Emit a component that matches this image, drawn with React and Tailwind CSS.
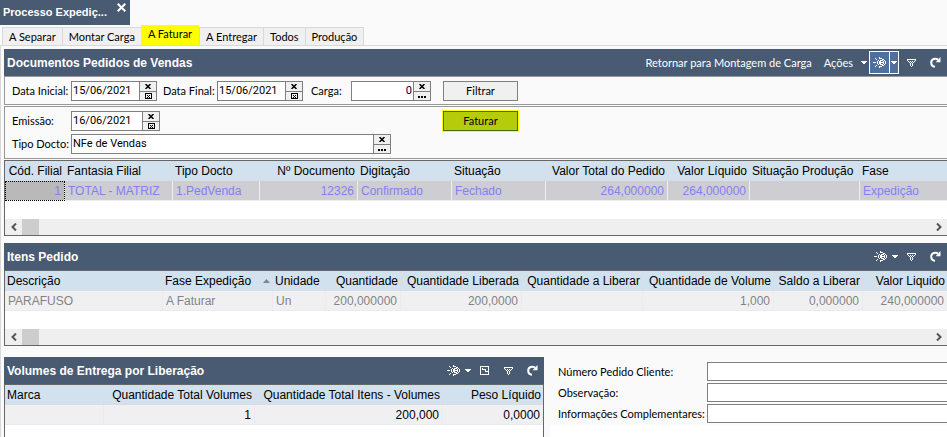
const tabs = ['A Separar', 'Montar Carga', 'A Faturar', 'A Entregar', 'Todos', 'Produção']

const pedidoColumns = [
  { label: 'Cód. Filial', width: 'w-[60px]', right: true },
  { label: 'Fantasia Filial', width: 'w-[108px]' },
  { label: 'Tipo Docto', width: 'w-[87px]' },
  { label: 'Nº Documento', width: 'w-[98px]', right: true },
  { label: 'Digitação', width: 'w-[94px]' },
  { label: 'Situação', width: 'w-[94px]' },
  { label: 'Valor Total do Pedido', width: 'w-[122px]', right: true },
  { label: 'Valor Líquido', width: 'w-[82px]', right: true },
  { label: 'Situação Produção', width: 'w-[110px]' },
  { label: 'Fase', width: '' },
]

const itemColumns = [
  { label: 'Descrição', width: 'w-[158px]' },
  { label: 'Fase Expedição', width: 'w-[110px]', sorted: true },
  { label: 'Unidade', width: 'w-[53px]' },
  { label: 'Quantidade', width: 'w-[75px]', right: true },
  { label: 'Quantidade Liberada', width: 'w-[121px]', right: true },
  { label: 'Quantidade a Liberar', width: 'w-[121px]', right: true },
  { label: 'Quantidade de Volume', width: 'w-[131px]', right: true },
  { label: 'Saldo a Liberar', width: 'w-[89px]', right: true },
  { label: 'Valor Liquido', width: '', right: true },
]

const volumeColumns = [
  { label: 'Marca', width: 'w-[99px]' },
  { label: 'Quantidade Total Volumes', width: 'w-[151px]', right: true },
  { label: 'Quantidade Total Itens - Volumes', width: 'w-[188px]', right: true },
  { label: 'Peso Líquido', width: '', right: true },
]

const extraFields = ['Número Pedido Cliente:', 'Observação:', 'Informações Complementares:']

function Caret() {
  return (
    <svg width="6" height="3" viewBox="0 0 6 3" fill="currentColor" shapeRendering="crispEdges">
      <path d="M0 0h6v1H0zM1 1h4v1H1zM2 2h2v1H2z" />
    </svg>
  )
}

function ViewIcon() {
  return (
    <svg width="14" height="11" viewBox="0 0 14 11" fill="currentColor" shapeRendering="crispEdges">
      {/* rays */}
      <path d="M0 5h3v1H0zM2 1h1v1H2zM3 2h1v1H3zM2 9h1v1H2zM3 8h1v1H3zM6 0h1v2H6zM6 9h1v2H6z" />
      {/* eye */}
      <path d="M5 3h1v1H5zM4 4h1v3H4zM5 7h1v1H5zM7 1h2v1H7zM9 2h2v1H9zM11 3h1v1h-1zM12 4h1v3h-1zM11 7h1v1h-1zM9 8h2v1H9zM7 9h2v1H7z" />
      <path d="M7 3h3v1H7zM6 4h2v3H6zM8 5h2v1H8zM7 7h3v1H7zM10 4h1v3h-1z" />
    </svg>
  )
}

function FilterIcon() {
  return (
    <svg width="9" height="8" viewBox="0 0 9 8" fill="currentColor" shapeRendering="crispEdges">
      <path d="M0 0h9v1H0zM0 1h1v1H0zM8 1h1v1H8zM1 2h1v1H1zM3 2h1v1H3zM5 2h1v1H5zM7 2h1v1H7zM2 3h1v1H2zM4 3h1v1H4zM6 3h1v1H6zM3 4h1v3H3zM5 4h1v3H5zM4 7h1v1H4z" />
    </svg>
  )
}

function RefreshIcon() {
  return (
    <svg width="11" height="11" viewBox="0 0 11 11" fill="none" stroke="currentColor">
      <path d="M8 2.6C5.5.6 1.2 2 1.2 5.6c0 2.4 1.7 4 3.8 4.2" strokeWidth="2" />
      <path d="M10.5 0v5.2H5.6z" fill="currentColor" stroke="none" />
    </svg>
  )
}

function ExpandIcon() {
  return (
    <svg width="9" height="9" viewBox="0 0 9 9" fill="currentColor" shapeRendering="crispEdges">
      <path d="M0 0h9v1H0zM0 8h9v1H0zM0 1h1v7H0zM8 1h1v7H8zM2 3h4v1H2zM5 4h1v1H5zM5 5h3v1H5zM2 2h1v1H2z" />
    </svg>
  )
}

function ToolButton({ label, className = '', children }) {
  return (
    <button
      type="button"
      aria-label={label}
      className={`flex items-center justify-center ${className}`}
    >
      {children}
    </button>
  )
}

function PanelHeader({ title, children }) {
  return (
    <div className="flex h-[27px] shrink-0 items-center bg-[#495a73] pl-[3px] text-white">
      <h2 className="flex-1 text-[12px] font-bold">{title}</h2>
      {children}
    </div>
  )
}

function Grid({ columns, row, name, muted, selected, children }) {
  let rowClass = 'bg-[#f0f0f3] text-black'
  let cellBorder = 'border-[#ebebee]'
  if (muted) rowClass = 'bg-[#f0f0f3] text-[#838383]'
  if (selected) {
    rowClass = 'bg-[#cdcdd2] text-[#8480f2]'
    cellBorder = 'border-[#efeff2]'
  }

  return (
    <div className={`flex flex-col border-t border-l border-[#666] bg-white ${children ? 'border-b' : ''}`}>
      <table aria-label={name} className="w-full table-fixed border-separate border-spacing-0">
        <thead>
          <tr className="h-5 bg-[#d2e1ee] text-black">
            {columns.map((col) => (
              <th
                key={col.label}
                className={`border-r border-b border-[#dadde1] px-[2px] py-0 font-normal whitespace-nowrap last:border-r-0 ${col.width} ${col.right ? 'text-right' : 'text-left'}`}
              >
                {col.sorted ? (
                  <span className="flex items-center justify-between">
                    {col.label}
                    <svg width="7" height="4" viewBox="0 0 7 4" fill="#858585">
                      <path d="M3.5 0L7 4H0z" />
                    </svg>
                  </span>
                ) : (
                  col.label
                )}
              </th>
            ))}
          </tr>
        </thead>
        <tbody>
          <tr className={`h-5 ${rowClass}`}>
            {row.map((value, index) => (
              <td
                key={index}
                className={`border-r border-b px-[3px] py-0 whitespace-nowrap last:border-r-0 ${cellBorder} ${columns[index].right ? 'text-right' : 'text-left'} ${selected && index === 0 ? 'bg-[#b9b9b9] outline-1 -outline-offset-1 outline-dotted outline-black' : ''}`}
              >
                {value}
              </td>
            ))}
          </tr>
        </tbody>
      </table>
      {children}
    </div>
  )
}

function ScrollBar() {
  return (
    <div className="mt-[18px] flex h-4 items-center bg-[#efefef] text-[#555]">
      <button type="button" aria-label="Rolar para a esquerda" className="flex w-[17px] justify-center">
        <svg width="6" height="8" viewBox="0 0 6 8" fill="none" stroke="currentColor" strokeWidth="2">
          <path d="M5 .5L1.5 4 5 7.5" />
        </svg>
      </button>
      <div className="h-full w-[17px] bg-[#cdcdcd]" />
      <button type="button" aria-label="Rolar para a direita" className="ml-auto flex w-[17px] justify-center">
        <svg width="6" height="8" viewBox="0 0 6 8" fill="none" stroke="currentColor" strokeWidth="2">
          <path d="M1 .5L4.5 4 1 7.5" />
        </svg>
      </button>
    </div>
  )
}

function Field({ id, label, value, labelWidth, width, lookup, right }) {
  return (
    <div className="flex items-center">
      <label htmlFor={id} className={`shrink-0 whitespace-nowrap ${labelWidth}`}>
        {label}
      </label>
      <div className={`flex h-5 border border-[#7f7f7f] bg-white ${width}`}>
        <input
          id={id}
          type="text"
          defaultValue={value}
          className={`min-w-0 flex-1 bg-white px-[1px] font-[Roboto,sans-serif] outline-none ${right ? 'text-right text-[#000040]' : ''}`}
        />
        <div className="flex w-[17px] flex-col border-l border-[#7f7f7f] bg-[#f0f0f0]">
          <button type="button" aria-label="Limpar" className="flex h-[9px] items-center justify-center">
            <svg width="6" height="5" viewBox="0 0 6 5" fill="none" stroke="black" strokeWidth="1.5">
              <path d="M.5 0l5 5M5.5 0l-5 5" />
            </svg>
          </button>
          <button
            type="button"
            aria-label={lookup ? 'Pesquisar' : 'Calendário'}
            className="flex h-[9px] items-center justify-center border-t border-[#7f7f7f]"
          >
            {lookup ? (
              <svg width="8" height="6" viewBox="0 0 8 6" shapeRendering="crispEdges">
                <path d="M0 3h2v2H0zM3 3h2v2H3zM6 3h2v2H6z" />
              </svg>
            ) : (
              <svg width="7" height="6" viewBox="0 0 7 6" shapeRendering="crispEdges">
                <path d="M0 0h7v1H0zM0 5h7v1H0zM0 1h1v4H0zM6 1h1v4H6zM2 2h1v1H2zM4 2h1v1H4zM3 3h1v1H3zM2 4h1v1H2zM4 4h1v1H4z" />
              </svg>
            )}
          </button>
        </div>
      </div>
    </div>
  )
}

export default function App() {
  return (
    <div className="flex h-screen flex-col overflow-hidden bg-[#fafafa] font-['Liberation_Sans',Arial,sans-serif] text-[12px] leading-4 text-black">
      <div className="flex h-[25px] w-[130px] shrink-0 justify-between bg-[#495a73] pr-1 pl-[3px] text-white">
        <span className="pt-1 text-[11px] font-bold">Processo Expediç...</span>
        <button type="button" aria-label="Fechar" className="flex h-[14px] items-center">
          <svg width="9" height="9" viewBox="0 0 9 9" fill="none" stroke="currentColor" strokeWidth="2">
            <path d="M.7.7l7.6 7.6M8.3.7L.7 8.3" />
          </svg>
        </button>
      </div>

      {/* Process steps */}
      <div
        role="tablist"
        className="flex h-[21px] shrink-0 items-end border-b border-[#d9d9d9] pl-[2px] font-[Lato,sans-serif] text-[11px]"
      >
        {tabs.map((tab) => (
          <button
            key={tab}
            type="button"
            role="tab"
            aria-selected={tab === 'A Faturar'}
            className={
              tab === 'A Faturar'
                ? 'h-5 bg-[#ffff00] px-[7px] pb-[2px]'
                : 'h-[18px] border-t border-l border-[#d9d9d9] bg-[#f0f0f0] px-[6px] last:border-r'
            }
          >
            {tab}
          </button>
        ))}
      </div>

      <main className="flex min-h-0 flex-1 flex-col border-l border-[#d9d9d9] pt-[3px] pl-[3px]">
        <section className="shrink-0">
          <PanelHeader title="Documentos Pedidos de Vendas">
            <div className="flex items-center font-[Lato,sans-serif] text-[11px]">
              <button type="button" className="mr-3">Retornar para Montagem de Carga</button>
              <button type="button" className="mr-[2px] flex items-center gap-2">
                Ações <Caret />
              </button>
              <div className="flex h-[23px] border border-white bg-[#50709c]">
                <ToolButton label="Visualizar" className="w-[19px]">
                  <ViewIcon />
                </ToolButton>
                <ToolButton label="Opções de visualização" className="w-[9px] border-l border-white">
                  <Caret />
                </ToolButton>
              </div>
              <ToolButton label="Filtro" className="w-6">
                <FilterIcon />
              </ToolButton>
              <ToolButton label="Atualizar" className="w-6">
                <RefreshIcon />
              </ToolButton>
            </div>
          </PanelHeader>

          <form className="font-[Lato,sans-serif] text-[11px]" onSubmit={(e) => e.preventDefault()}>
            <div className="grid h-[29px] grid-cols-[431px_75px] items-center border border-r-0 border-[#999] pl-[7px]">
              <div className="flex">
                <Field id="data-inicial" label="Data Inicial:" value="15/06/2021" labelWidth="w-[59px]" width="w-[86px]" />
                <div className="ml-[6px]">
                  <Field id="data-final" label="Data Final:" value="15/06/2021" labelWidth="w-[54px]" width="w-[86px]" />
                </div>
                <div className="ml-2">
                  <Field id="carga" label="Carga:" value="0" labelWidth="w-[40px]" width="w-[80px]" lookup right />
                </div>
              </div>
              <button type="submit" className="h-5 border border-[#7f7f7f] bg-[#f0f0f0]">Filtrar</button>
            </div>

            <div className="mt-[1px] grid h-[53px] grid-cols-[431px_75px] content-start gap-y-[3px] border border-r-0 border-[#999] pt-1 pl-[7px]">
              <Field id="emissao" label="Emissão:" value="16/06/2021" labelWidth="w-[59px]" width="w-[89px]" />
              <button
                type="submit"
                className="h-5 border border-[#3f7000] bg-[#b5cc0a] outline-1 outline-[#ffff00]"
              >
                Faturar
              </button>
              <Field id="tipo-docto" label="Tipo Docto:" value="NFe de Vendas" labelWidth="w-[59px]" width="w-[320px]" lookup />
            </div>
          </form>

          <div className="mt-[1px]">
            <Grid
              name="Documentos Pedidos de Vendas"
              columns={pedidoColumns}
              row={['1', 'TOTAL - MATRIZ', '1.PedVenda', '12326', 'Confirmado', 'Fechado', '264,000000', '264,000000', '', 'Expedição']}
              selected
            >
              <ScrollBar />
            </Grid>
          </div>
        </section>

        <section className="mt-[7px] shrink-0">
          <PanelHeader title="Itens Pedido">
            <ToolButton label="Visualizar" className="w-[19px]">
              <ViewIcon />
            </ToolButton>
            <ToolButton label="Opções de visualização" className="w-[9px]">
              <Caret />
            </ToolButton>
            <ToolButton label="Filtro" className="w-6">
              <FilterIcon />
            </ToolButton>
            <ToolButton label="Atualizar" className="w-6">
              <RefreshIcon />
            </ToolButton>
          </PanelHeader>
          <Grid
            name="Itens Pedido"
            columns={itemColumns}
            row={['PARAFUSO', 'A Faturar', 'Un', '200,000000', '200,0000', '', '1,000', '0,000000', '240,000000']}
            muted
          >
            <ScrollBar />
          </Grid>
        </section>

        <div className="mt-[11px] flex min-h-0 flex-1">
          <section className="flex w-[540px] shrink-0 flex-col">
            <PanelHeader title="Volumes de Entrega por Liberação">
              <ToolButton label="Visualizar" className="w-[19px]">
                <ViewIcon />
              </ToolButton>
              <ToolButton label="Opções de visualização" className="w-[9px]">
                <Caret />
              </ToolButton>
              <ToolButton label="Expandir" className="w-6">
                <ExpandIcon />
              </ToolButton>
              <ToolButton label="Filtro" className="w-6">
                <FilterIcon />
              </ToolButton>
              <ToolButton label="Atualizar" className="w-6">
                <RefreshIcon />
              </ToolButton>
            </PanelHeader>
            <div className="flex-1 border-r border-l border-[#666] bg-white">
              <div className="-ml-px">
                <Grid name="Volumes de Entrega" columns={volumeColumns} row={['', '1', '200,000', '0,0000']} />
              </div>
            </div>
          </section>

          <div className="ml-[6px] min-w-0 flex-1 bg-white">
            <div className="flex flex-col gap-[2px] bg-[#fafafa] pt-[5px] pb-[2px] pl-2 font-[Lato,sans-serif] text-[11px]">
              {extraFields.map((label, index) => (
                <div key={label} className="flex items-center">
                  <label htmlFor={`extra-${index}`} className="w-[149px] shrink-0 whitespace-nowrap">
                    {label}
                  </label>
                  <input
                    id={`extra-${index}`}
                    type="text"
                    className="h-[19px] min-w-0 flex-1 border border-r-0 border-[#7f7f7f] bg-white px-[2px] outline-none"
                  />
                </div>
              ))}
            </div>
          </div>
        </div>
      </main>
    </div>
  )
}
